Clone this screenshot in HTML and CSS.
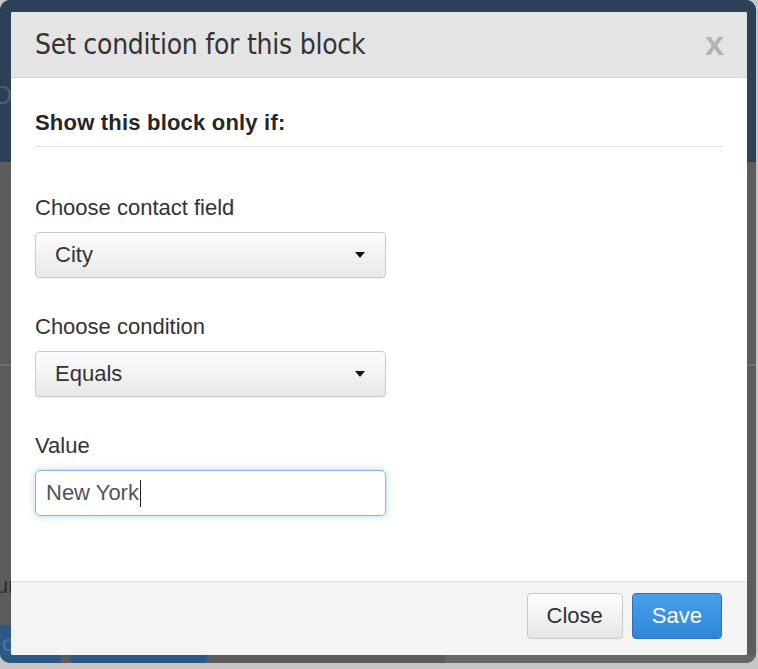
FILE: index.html
```html
<!DOCTYPE html>
<html lang="en">
<head>
  <meta charset="UTF-8">
  <meta name="viewport" content="width=device-width, initial-scale=1.0">
  <title>Set condition for this block</title>
  <link rel="stylesheet" href="styles.css">
</head>
<body>
  <div class="screen">
    <div class="page">
      <div class="topbar"><span class="logo">O</span></div>
      <div class="content">
        <div class="panel"></div>
        <div class="panel tall"><span class="stub">ur</span></div>
      </div>
      <div class="actions">
        <span class="page-btn first">oad</span>
        <span class="page-btn">Purchase</span>
        <span class="side"></span>
      </div>
    </div>

    <div class="modal">
      <div class="modal-header">
        <h4 class="modal-title">Set condition for this block</h4>
        <span class="close">x</span>
      </div>

      <div class="modal-body">
        <h5 class="section-title">Show this block only if:</h5>
        <hr>

        <label class="field-label">Choose contact field</label>
        <div class="select"><span>City</span><i class="caret"></i></div>

        <label class="field-label">Choose condition</label>
        <div class="select"><span>Equals</span><i class="caret"></i></div>

        <label class="field-label">Value</label>
        <div class="input focused">New York<span class="cursor"></span></div>
      </div>

      <div class="modal-footer">
        <button class="btn">Close</button>
        <button class="btn btn-primary">Save</button>
      </div>
    </div>
  </div>
</body>
</html>
```

FILE: styles.css
```css
body {
  margin: 0;
  background-color: #c6c6c6;
  font-family: "Liberation Sans", Arial, sans-serif;
}

.screen {
  position: relative;
  width: 756px;
  height: 663px;
  border-radius: 10px;
  overflow: hidden;
  background-color: #5c5c5c;
}

/* dimmed page behind the dialog */
.page {
  display: flex;
  flex-direction: column;
  height: 100%;
}
.topbar {
  height: 162px;
  background-color: #2b4157;
  display: flex;
  align-items: center;
}
.logo {
  margin-left: -8px;
  margin-top: 28px;
  color: #4a5f73;
  font-size: 26px;
}
.content {
  flex: 1;
  display: flex;
  flex-direction: column;
}
.panel {
  height: 202px;
  border-bottom: 2px solid #6e6e6e;
}
.panel.tall {
  flex: 1;
  border-bottom: none;
  display: flex;
  align-items: flex-end;
  padding-bottom: 26px;
}
.stub {
  margin-left: -4px;
  color: #2e2e2e;
  font-size: 22px;
}
.actions {
  display: flex;
  height: 38px;
  gap: 9px;
}
.page-btn {
  background-color: #2c5983;
  color: #56789a;
  font-size: 22px;
  padding: 6px 22px;
  border-radius: 0 0 4px 4px;
}
.page-btn.first {
  margin-left: -20px;
  border-radius: 0 0 4px 8px;
  padding-right: 22px;
}
.side {
  flex: 1;
  margin-left: 229px;
  margin-top: 30px;
  background-color: #666;
}

/* dialog */
.modal {
  position: absolute;
  left: 11px;
  top: 12px;
  width: 736px;
  height: 643px;
  background-color: #fff;
  border-radius: 2px;
  display: flex;
  flex-direction: column;
  overflow: hidden;
}
.modal-header {
  height: 65px;
  background-color: #e4e4e4;
  border-bottom: 1px solid #d6d6d6;
  display: flex;
  align-items: center;
  justify-content: space-between;
  padding: 0 25px 0 24px;
}
.modal-title {
  margin: 0;
  font-family: "DejaVu Sans Condensed", "Liberation Sans Narrow", sans-serif;
  font-weight: normal;
  font-size: 28px;
  color: #333;
  letter-spacing: -0.25px;
}
.close {
  font-family: "Liberation Sans Narrow", "Liberation Sans", sans-serif;
  font-weight: bold;
  font-size: 34px;
  color: #b3b3b3;
  margin-top: -2px;
  margin-right: -2px;
}

.modal-body {
  flex: 1;
  padding: 32px 24px 0 24px;
}
.section-title {
  margin: 0;
  font-size: 22px;
  line-height: 26px;
  font-weight: bold;
  color: #262626;
  letter-spacing: 0.2px;
}
hr {
  margin: 10px 0 0 0;
  border: none;
  border-top: 1px solid #e0e0e0;
}
.field-label {
  display: block;
  margin-top: 48px;
  margin-bottom: 11px;
  font-size: 22px;
  line-height: 26px;
  color: #333;
}
.select + .field-label {
  margin-top: 36px;
}
.select {
  width: 351px;
  height: 46px;
  box-sizing: border-box;
  display: flex;
  align-items: center;
  justify-content: space-between;
  padding: 0 20px 0 19px;
  border: 1px solid #c9c9c9;
  border-radius: 4px;
  background: linear-gradient(#fdfdfd, #e8e8e8);
  box-shadow: 0 1px 1px rgba(0, 0, 0, 0.06);
  font-size: 22px;
  color: #333;
}
.caret {
  width: 0;
  height: 0;
  border-left: 5px solid transparent;
  border-right: 5px solid transparent;
  border-top: 6px solid #111;
}
.input {
  width: 351px;
  height: 46px;
  box-sizing: border-box;
  display: flex;
  align-items: center;
  padding: 0 10px;
  border: 1px solid #86b6de;
  border-radius: 5px;
  font-size: 22px;
  color: #555;
}
.input.focused {
  box-shadow: 0 0 7px rgba(102, 175, 233, 0.5);
}
.cursor {
  display: inline-block;
  width: 1px;
  height: 27px;
  background-color: #222;
  margin-left: 1px;
}

.modal-footer {
  box-sizing: border-box;
  height: 74px;
  border-top: 1px solid #dcdcdc;
  background-color: #f4f4f4;
  display: flex;
  justify-content: flex-end;
  align-items: flex-start;
  gap: 9px;
  padding: 11px 25px 0 0;
}
.btn {
  height: 46px;
  padding: 0 19px;
  font-family: "Liberation Sans", Arial, sans-serif;
  font-size: 22px;
  color: #333;
  border: 1px solid #c8c8c8;
  border-radius: 4px;
  background: linear-gradient(#fefefe, #e6e6e6);
  cursor: pointer;
}
.btn-primary {
  color: #fff;
  border-color: #2a70b5;
  background: linear-gradient(#48a0ea, #2f86d9);
}
```
